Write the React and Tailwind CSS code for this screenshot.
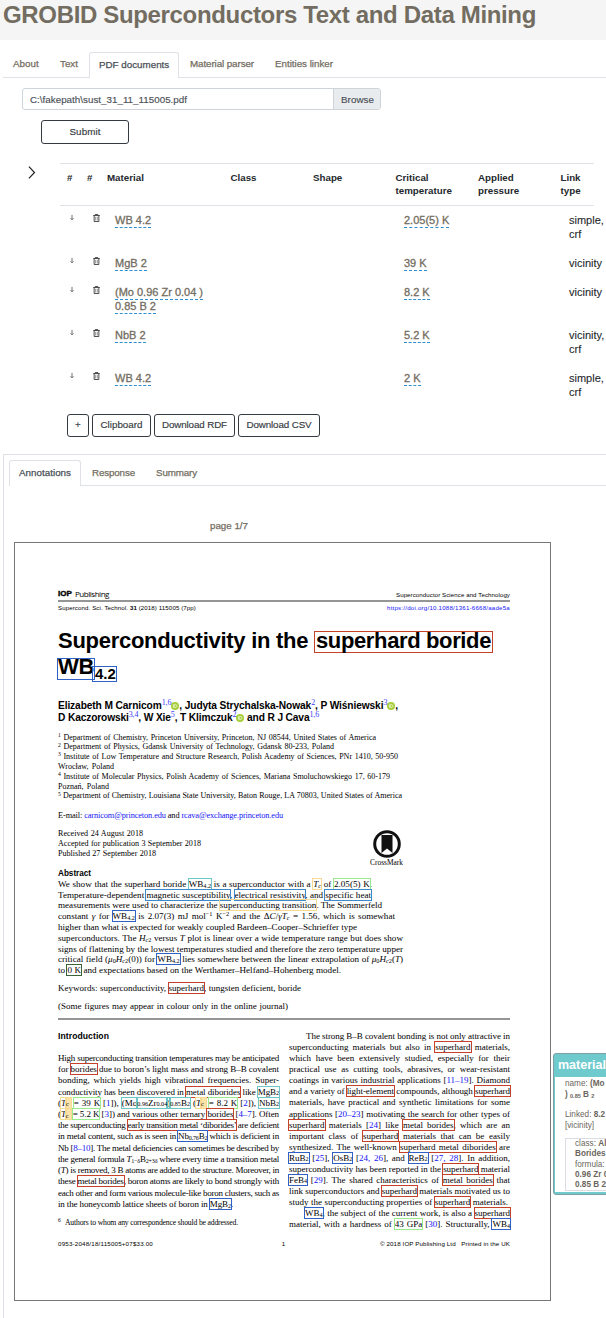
import { useLayoutEffect, useRef, useState } from "react";

// One line of text stretched or tightened to the width of its box.
function Line({ className = "", letters = false, children }) {
  const box = useRef(null);
  const text = useRef(null);
  const [style, setStyle] = useState({});
  useLayoutEffect(() => {
    const slack = box.current.getBoundingClientRect().width - text.current.getBoundingClientRect().width;
    const content = text.current.textContent;
    const spaces = (content.match(/ /g) || []).length;
    if (slack < 0 || letters || !spaces) setStyle({ letterSpacing: slack / content.length + "px" });
    else setStyle({ wordSpacing: slack / spaces + "px" });
  }, []);
  return (
    <div ref={box} className={"whitespace-nowrap " + className}>
      <span ref={text} style={style}>{children}</span>
    </div>
  );
}

const boxColor = {
  red: "outline-[#c5412a]",
  blue: "outline-[#2f61c6]",
  sky: "outline-[#3d89cb]",
  teal: "outline-[#6cc5c7]",
  yellow: "outline-[#f7da92]",
  green: "outline-[#98ec8c]",
  olive: "outline-[#3c6238]",
  fill: "outline-[#f7da92] bg-[#f9e3a8] pr-[2px]",
};
const B = ({ c, children }) => <span className={"outline-1 outline-solid " + boxColor[c]}>{children}</span>;
const A = ({ children }) => <span className="text-[#1414f5]">{children}</span>;
const S = ({ children }) => <sub className="bottom-[-0.12em] text-[0.68em]">{children}</sub>;
const P = ({ children }) => <sup className="text-[0.7em]">{children}</sup>;
const R = ({ children }) => <sup className="font-['Liberation_Serif',serif] text-[8px] font-normal text-[#3a3af5]">{children}</sup>;

const Orcid = () => (
  <svg viewBox="0 0 16 16" className="inline-block h-[8px] w-[8px] align-[-1px]">
    <circle cx="8" cy="8" r="8" fill="#a6ce39" />
    <path d="M4.8 4.5v7M7.3 4.8v6.4h1.4c4.2 0 4.2-6.4 0-6.4z" fill="none" stroke="#fff" strokeWidth="1.3" />
  </svg>
);

const Arrow = () => (
  <svg viewBox="0 0 8 8" className="h-[7px] w-[6px]" fill="none" stroke="#444" strokeWidth="1">
    <path d="M4 0.5v6.5M2 5l2 2 2-2" />
  </svg>
);
const Trash = () => (
  <svg viewBox="0 0 14 16" className="h-[8px] w-[7px]" fill="none" stroke="#333" strokeWidth="1.7">
    <path d="M0.500 3h13M4.5 2.5V1h5v1.5M2.300 3v12h9.400V3" />
    <path d="M5.300 5.500v7.500M8.700 5.500v7.500" stroke="#888" />
  </svg>
);

const Dash = ({ children }) => (
  <span className="border-b border-dashed border-[#2e8fd0] pb-[0.5px] text-[#736d61]">{children}</span>
);

const rows = [
  { h: "h-[43px]", m: ["WB 4.2"], t: "2.05(5) K", l: ["simple,", "crf"] },
  { h: "h-[29px]", m: ["MgB 2"], t: "39 K", l: ["vicinity"] },
  { h: "h-[43px]", m: ["(Mo 0.96 Zr 0.04 )", "0.85 B 2"], t: "8.2 K", l: ["vicinity"] },
  { h: "h-[43px]", m: ["NbB 2"], t: "5.2 K", l: ["vicinity,", "crf"] },
  { h: "h-[43px]", m: ["WB 4.2"], t: "2 K", l: ["simple,", "crf"] },
];

function Table() {
  return (
    <div className="ml-[60px]">
      <div className="grid h-[43px] w-[534px] grid-cols-[20px_20px_123.5px_82.5px_82.5px_82.5px_82.5px_40px] border-y border-[#dee2e6] pt-[6.5px] pl-[7px] text-[9.75px] leading-[13px] font-bold text-[#24282c]">
        <div>#</div>
        <div>#</div>
        <div>Material</div>
        <div>Class</div>
        <div>Shape</div>
        <div>Critical<br />temperature</div>
        <div>Applied<br />pressure</div>
        <div>Link<br />type</div>
      </div>
      {rows.map((r, i) => (
        <div key={i} className={"grid grid-cols-[23px_22px_289px_165px_60px] pt-[7px] pl-[10px] text-[11px] leading-[14.3px] text-[#24282c] " + r.h}>
          <div className="-ml-px pt-px"><Arrow /></div>
          <div className="pt-px"><Trash /></div>
          <div className="[-webkit-text-stroke:0.3px]">{r.m.map((x) => <div key={x}><Dash>{x}</Dash></div>)}</div>
          <div className="[-webkit-text-stroke:0.3px]"><Dash>{r.t}</Dash></div>
          <div className="whitespace-nowrap [-webkit-text-stroke:0.1px]">{r.l.map((x) => <div key={x}>{x}</div>)}</div>
        </div>
      ))}
    </div>
  );
}

const Btn = ({ className, w, children }) => (
  <div className={"flex items-center justify-center rounded-[3px] border border-[#343a40] text-[9.8px] text-[#343a40] [-webkit-text-stroke:0.15px] " + className}>
    <Line letters className={w}>{children}</Line>
  </div>
);

function LeftColumn() {
  return (
    <div className="w-[221px]">
      <div className="mb-[10.5px] h-[11px] font-['Liberation_Sans',sans-serif] leading-[11px] font-bold">
        <Line letters className="w-[51px] text-[8.6px]">Introduction</Line>
      </div>
      <div className="text-[9px] leading-[11.23px]">
        <Line>High superconducting transition temperatures may be anticipated</Line>
        <Line>for <B c="red">borides</B> due to boron’s light mass and strong B–B covalent</Line>
        <Line>bonding, which yields high vibrational frequencies. Super-</Line>
        <Line>conductivity has been discovered in <B c="red">metal diborides</B> like <B c="teal">MgB<S>2</S></B></Line>
        <Line>(<B c="yellow"><i>T</i></B><B c="fill"><S>c</S></B> <B c="green">= 39 K</B> [<A>1</A>]), <B c="teal">(Mo</B><B c="teal"><S>0.96</S>Zr<S>0.04</S></B><B c="teal">)</B><B c="teal"><S>0.85</S>B<S>2</S></B> (<B c="yellow"><i>T</i></B><B c="fill"><S>c</S></B> <B c="green">= 8.2 K</B> [<A>2</A>]), <B c="teal">NbB<S>2</S></B></Line>
        <Line>(<B c="yellow"><i>T</i></B><B c="fill"><S>c</S></B> <B c="green">= 5.2 K</B> [<A>3</A>]) and various other ternary <B c="red">borides</B> [<A>4–7</A>]. Often</Line>
        <Line>the superconducting <B c="red">early transition metal ‘diborides’</B> are deficient</Line>
        <Line>in metal content, such as is seen in <B c="blue">Nb<S>0.76</S>B<S>2</S></B> which is deficient in</Line>
        <Line>Nb [<A>8–10</A>]. The metal deficiencies can sometimes be described by</Line>
        <Line>the general formula <i>T</i><S>1−δ</S>B<S>2+3δ</S> where every time a transition metal</Line>
        <Line>(<i>T</i>) is removed, 3 B atoms are added to the structure. Moreover, in</Line>
        <Line>these <B c="red">metal borides</B>, boron atoms are likely to bond strongly with</Line>
        <Line>each other and form various molecule-like boron clusters, such as</Line>
        <Line className="w-[175px]">in the honeycomb lattice sheets of boron in <B c="blue">MgB<S>2</S></B>.</Line>
      </div>
      <div className="flex pt-[7px] text-[7.7px] leading-[11px]">
        <div className="w-[7px]"><P>6</P></div>
        <Line className="w-[173px]">Authors to whom any correspondence should be addressed.</Line>
      </div>
    </div>
  );
}

function RightColumn() {
  return (
    <div className="w-[221px] text-[9px] leading-[11.03px]">
      <Line className="ml-[17px] w-[204px]">The strong B–B covalent bonding is not only attractive in</Line>
      <Line>superconducting materials but also in <B c="red">superhard</B> materials,</Line>
      <Line>which have been extensively studied, especially for their</Line>
      <Line>practical use as cutting tools, abrasives, or wear-resistant</Line>
      <Line>coatings in various industrial applications [<A>11–19</A>]. Diamond</Line>
      <Line>and a variety of <B c="red">light-element</B> compounds, although <B c="red">superhard</B></Line>
      <Line>materials, have practical and synthetic limitations for some</Line>
      <Line>applications [<A>20–23</A>] motivating the search for other types of</Line>
      <Line><B c="red">superhard</B> materials [<A>24</A>] like <B c="red">metal borides</B>, which are an</Line>
      <Line>important class of <B c="red">superhard</B> materials that can be easily</Line>
      <Line>synthesized. The well-known <B c="red">superhard metal diborides</B> are</Line>
      <Line><B c="blue">RuB<S>2</S></B> [<A>25</A>], <B c="blue">OsB<S>2</S></B> [<A>24, 26</A>], and <B c="blue">ReB<S>2</S></B> [<A>27, 28</A>]. In addition,</Line>
      <Line>superconductivity has been reported in the <B c="red">superhard</B> material</Line>
      <Line><B c="blue">FeB<S>4</S></B> [<A>29</A>]. The shared characteristics of <B c="red">metal borides</B> that</Line>
      <Line>link superconductors and <B c="red">superhard</B> materials motivated us to</Line>
      <Line className="w-[219px]">study the superconducting properties of <B c="red">superhard</B> materials.</Line>
      <Line className="ml-[16px] w-[205px]"><B c="blue">WB<S>4</S></B>, the subject of the current work, is also a <B c="red">superhard</B></Line>
      <Line>material, with a hardness of <B c="green">43 GPa</B> [<A>30</A>]. Structurally, <B c="blue">WB<S>4</S></B></Line>
    </div>
  );
}

function Paper() {
  return (
    <div className="ml-[10px] h-[759px] w-[537px] border border-[#777] pt-[45px] pl-[43px] font-['Liberation_Serif',serif] text-black">
      <div className="w-[452px]">
        <div className="font-['Liberation_Sans',sans-serif]">
          <div className="flex h-[14px] items-center justify-between border-b-2 border-[#959595] leading-[12px]">
            <div className="flex gap-[3px] text-[8px]">
              <Line letters className="w-[14px] font-bold [-webkit-text-stroke:0.4px]">IOP</Line>
              <Line letters className="w-[34px] font-['Open_Sans',sans-serif]">Publishing</Line>
            </div>
            <Line letters className="w-[114px] pt-[2px] text-[6.1px]">Superconductor Science and Technology</Line>
          </div>
          <div className="flex h-[11px] items-center justify-between text-[6.1px]">
            <Line letters className="w-[138px]">Supercond. Sci. Technol. <b>31</b> (2018) 115005 (7pp)</Line>
            <Line letters className="w-[123px] text-[#1414f5]">https://doi.org/10.1088/1361-6668/aade5a</Line>
          </div>
          <div className="mt-[15px] h-[72px] text-[22px] leading-[26px] font-bold">
            <div className="flex h-[26px]">
              <Line className="w-[256px]">Superconductivity in the&nbsp;</Line>
              <span className="mt-[3px] h-[22px] w-[179px] border border-[#c5412a] pl-px leading-[18px]"><Line className="w-[175px]">superhard boride</Line></span>
            </div>
            <div className="flex">
              <span className="mt-[4px] -ml-px h-[22px] w-[38px] border border-[#2f61c6] leading-[16px]"><Line letters className="w-[36px]">WB</Line></span>
              <span className="mt-[12px] -ml-[3px] h-[16px] w-[25px] border border-[#2f61c6] pl-[2px] text-[15px] leading-[14px]">4.2</span>
            </div>
          </div>
          <div className="h-[32px] text-[10.2px] leading-[11.5px] font-bold">
            <Line letters className="w-[340px]">Elizabeth M Carnicom<R>1,6</R><Orcid />, Judyta Strychalska-Nowak<R>2</R>, P Wiśniewski<R>3</R><Orcid />,</Line>
            <Line letters className="w-[261px]">D Kaczorowski<R>3,4</R>, W Xie<R>5</R>, T Klimczuk<R>2</R><Orcid /> and R J Cava<R>1,6</R></Line>
          </div>
        </div>
        <div className="h-[78px] pt-[0.5px] text-[8px] leading-[9.83px]">
          <Line className="w-[318px]"><P>1</P> Department of Chemistry, Princeton University, Princeton, NJ 08544, United States of America</Line>
          <Line className="w-[276px]"><P>2</P> Department of Physics, Gdansk University of Technology, Gdansk 80-233, Poland</Line>
          <Line className="w-[340px]"><P>3</P> Institute of Low Temperature and Structure Research, Polish Academy of Sciences, PNr 1410, 50-950</Line>
          <Line className="w-[56px]">Wrocław, Poland</Line>
          <Line className="w-[332px]"><P>4</P> Institute of Molecular Physics, Polish Academy of Sciences, Mariana Smoluchowskiego 17, 60-179</Line>
          <Line className="w-[51px]">Poznań, Poland</Line>
          <Line className="w-[344px]"><P>5</P> Department of Chemistry, Louisiana State University, Baton Rouge, LA 70803, United States of America</Line>
        </div>
        <div className="h-[19px] pt-[0.5px] text-[8.3px] leading-[10px]">
          <Line className="w-[225px]">E-mail: <A>carnicom@princeton.edu</A> and <A>rcava@exchange.princeton.edu</A></Line>
        </div>
        <div className="flex h-[39px] justify-between pr-[107px] text-[8.1px] leading-[9.8px]">
          <div>
            <Line className="w-[85px]">Received 24 August 2018</Line>
            <Line className="w-[143px]">Accepted for publication 3 September 2018</Line>
            <Line className="w-[98px]">Published 27 September 2018</Line>
          </div>
          <div className="flex flex-col items-center pt-px">
            <svg viewBox="0 0 28 28" className="h-[28px] w-[28px]">
              <circle cx="14" cy="14" r="12.3" fill="#fff" stroke="#111" strokeWidth="3" />
              <path d="M8.5 5h11v18l-5.5-4.500-5.500 4.500z" fill="#111" />
            </svg>
            <Line letters className="w-[33px] text-[7.4px]">CrossMark</Line>
          </div>
        </div>
        <Line letters className="w-[33px] pt-[0.5px] font-['Liberation_Sans',sans-serif] text-[8.2px] leading-[10.3px] font-bold">Abstract</Line>
        <div className="h-[104px] text-[9.1px] leading-[10.8px]">
          <Line className="w-[314px]">We show that the superhard boride <B c="teal">WB<S>4.2</S></B> is a superconductor with a <B c="yellow"><i>T<S>c</S></i></B> of <B c="green">2.05(5) K</B>.</Line>
          <Line className="w-[313px]">Temperature-dependent <B c="sky">magnetic susceptibility</B>, <B c="sky">electrical resistivity</B>, and <B c="sky">specific heat</B></Line>
          <Line className="w-[324px]">measurements were used to characterize the <B c="yellow">superconducting transition</B>. The Sommerfeld</Line>
          <Line className="w-[337px]">constant <i>γ</i> for <B c="blue">WB<S>4.2</S></B> is 2.07(3) mJ mol<P>−1</P> K<P>−2</P> and the Δ<i>C</i>/<i>γT<S>c</S></i> = 1.56, which is somewhat</Line>
          <Line className="w-[299px]">higher than what is expected for weakly coupled Bardeen–Cooper–Schrieffer type</Line>
          <Line className="w-[345px]">superconductors. The <i>H</i><S><i>c</i>2</S> versus <i>T</i> plot is linear over a wide temperature range but does show</Line>
          <Line className="w-[345px]">signs of flattening by the lowest temperatures studied and therefore the zero temperature upper</Line>
          <Line className="w-[345px]">critical field (<i>μ</i><S>0</S><i>H</i><S><i>c</i>2</S>(0)) for <B c="blue">WB<S>4.2</S></B> lies somewhere between the linear extrapolation of <i>μ</i><S>0</S><i>H</i><S><i>c</i>2</S>(<i>T</i>)</Line>
          <Line className="w-[283px]">to <B c="olive">0 K</B> and expectations based on the Werthamer–Helfand–Hohenberg model.</Line>
        </div>
        <div className="flex h-[37px] flex-col gap-[8px] border-b-2 border-[#959595] text-[9px] leading-[10px]">
          <Line className="w-[243px]">Keywords: superconductivity, <B c="red">superhard</B>, tungsten deficient, boride</Line>
          <Line className="w-[230px]">(Some figures may appear in colour only in the online journal)</Line>
        </div>
        <div className="flex h-[218px] justify-between pt-[11.5px]">
          <LeftColumn />
          <RightColumn />
        </div>
        <div className="flex justify-between font-['Liberation_Sans',sans-serif] text-[6.2px] leading-[11px]">
          <Line letters className="w-[95px]">0953-2048/18/115005+07$33.00</Line>
          <div className="pl-[34px]">1</div>
          <Line letters className="w-[130px]">© 2018 IOP Publishing Ltd&nbsp;&nbsp; Printed in the UK</Line>
        </div>
      </div>
    </div>
  );
}

export default function App() {
  return (
    <div className="relative h-[1318px] w-[606px] overflow-hidden bg-white font-['Liberation_Sans',Arial,sans-serif] text-[9.8px] text-[#24282c]">
      <div className="h-[40px] bg-[#f5f5f5] pl-[3px] text-[24px] leading-[30px] font-bold text-[#736d61]">
        <Line letters className="w-[533px]">GROBID Superconductors Text and Data Mining</Line>
      </div>
      <div className="ml-[3px] flex h-[38px] items-end border-b border-[#dee2e6] pt-[12px] leading-[24px] text-[#736d61] [-webkit-text-stroke:0.25px]">
        <div className="h-[25px] w-[47px] pl-[10px]">About</div>
        <div className="h-[25px] w-[39px] pl-[10px]">Text</div>
        <div className="-mb-px h-[26px] w-[90px] rounded-t-[3px] border border-b-0 border-[#dee2e6] bg-white pl-[9px] leading-[23px] text-[#495057]">PDF documents</div>
        <div className="h-[25px] pl-[11px]"><Line letters className="w-[64px]">Material parser</Line></div>
        <div className="h-[25px] pl-[21px]"><Line letters className="w-[58px]">Entities linker</Line></div>
      </div>
      <div className="mt-[10px] ml-[22px] flex h-[22px] w-[359px] rounded-[3px] border border-[#ced4da] leading-[21px] text-[#495057] [-webkit-text-stroke:0.15px]">
        <div className="w-[310px] pl-[7px]"><Line letters className="w-[157px]">C:\fakepath\sust_31_11_115005.pdf</Line></div>
        <div className="flex-1 border-l border-[#ced4da] bg-[#e9ecef] pl-[7px]"><Line letters className="w-[33px]">Browse</Line></div>
      </div>
      <Btn className="mt-[10px] ml-[41px] h-[24px] w-[88px]" w="w-[31px]">Submit</Btn>
      <div className="relative h-[19px]">
        <svg viewBox="0 0 8 14" className="absolute top-[22px] left-[28px] h-[13px] w-[8px]" fill="none" stroke="#222" strokeWidth="1.3">
          <path d="M0.700 0.700l6 6.300-6 6.300" />
        </svg>
      </div>
      <Table />
      <div className="mt-[7px] ml-[67px] flex h-[23px] gap-[3px]">
        <Btn className="w-[22px]" w="w-[6px]">+</Btn>
        <Btn className="w-[59px]" w="w-[42px]">Clipboard</Btn>
        <Btn className="w-[81px]" w="w-[65px]">Download RDF</Btn>
        <Btn className="w-[82px]" w="w-[65px]">Download CSV</Btn>
      </div>
      <div className="mt-[17px] ml-[3px] h-[880px] border-t border-l border-[#dee2e6] pt-[5px]">
        <div className="ml-[5px] flex h-[26px] border-b border-[#dee2e6] leading-[25px] text-[#736d61] [-webkit-text-stroke:0.25px]">
          <div className="h-[26px] w-[72px] rounded-t-[3px] border border-b-0 border-[#dee2e6] bg-white pl-[9px] leading-[23px] text-[#495057]"><Line letters className="w-[52px]">Annotations</Line></div>
          <div className="pl-[11px]"><Line letters className="w-[43px]">Response</Line></div>
          <div className="pl-[21px]"><Line letters className="w-[41px]">Summary</Line></div>
        </div>
        <div className="h-[56px] pt-[33px] pl-[206px] leading-[14px] text-[#736d61] [-webkit-text-stroke:0.25px]"><Line letters className="w-[38px]">page 1/7</Line></div>
        <Paper />
      </div>
      <div className="absolute top-[1053px] left-[553px] h-[142px] w-[120px] rounded-[3px] border border-[#7f9fa6] bg-[#6fcacd] pl-px leading-[11px] text-[#6b665c]">
        <div className="h-[23px] pl-[3px] text-[12.5px] leading-[23px] font-bold text-white"><Line letters className="w-[48px]">material</Line></div>
        <div className="h-[115px] overflow-hidden bg-white pt-px pl-[10px] text-[8.2px] whitespace-nowrap">
          <div>name: <b>(Mo <S>0.96</S></b></div>
          <div><b>) <S>0.85</S> B <S>2</S></b></div>
          <div className="mt-[9px]">Linked: <b>8.2</b></div>
          <div>[vicinity]</div>
          <div className="mt-[7px] border border-[#dcdce4] pl-[9px] leading-[10.3px]">
            <div>class: <b>Alloys,</b></div>
            <div><b>Borides</b></div>
            <div>formula:</div>
            <div><b>0.96 Zr 0.04</b></div>
            <div><b>0.85 B 2</b></div>
          </div>
        </div>
      </div>
    </div>
  );
}
